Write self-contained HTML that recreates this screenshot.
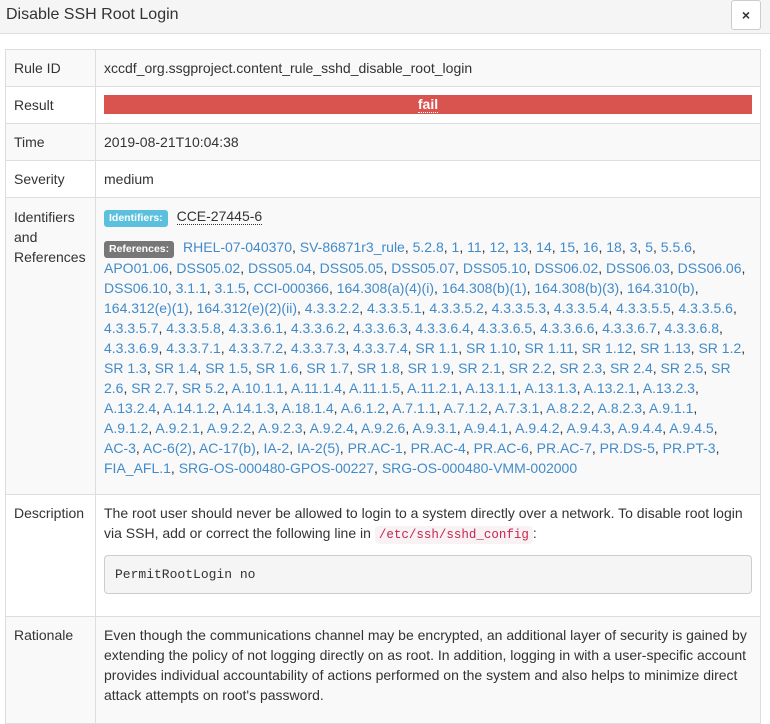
<!DOCTYPE html>
<html><head><meta charset="utf-8"><style>
body{margin:0;width:770px;height:724px;overflow:hidden;background:#fff;font-family:"Liberation Sans",sans-serif;font-size:14px;color:#333;line-height:20px}
.hdr{position:absolute;left:0;top:0;width:770px;height:33px;background:#f5f5f5;border-bottom:1px solid #ddd}
.hdr h4{margin:0;position:absolute;left:6px;top:5px;font-size:16px;font-weight:normal;line-height:20px}
.close{position:absolute;left:731px;top:0;width:28px;height:28px;border:1px solid #ccc;border-radius:3px;background:#fff;text-align:center;line-height:28px;font-size:14px;font-weight:bold}
table{position:absolute;left:5px;top:49px;width:756px;border-collapse:collapse}
td{border:1px solid #ddd;padding:8px;vertical-align:top}
td.l{width:73px}
tr.s td{background:#f9f9f9}
.fail{background:#d9534f;color:#fff;text-align:center;font-weight:bold;height:19px;line-height:19px}
.fail span{border-bottom:1px dotted #fff}
.lab{display:inline-block;font-size:10.5px;font-weight:bold;color:#fff;padding:0 5px;border-radius:3px;line-height:17px;margin-right:5px}
a{color:#428bca;text-decoration:none}
.refs div{white-space:nowrap}
code{font-family:"Liberation Mono",monospace;font-size:12.5px;color:#c7254e;background:#f9f2f4;padding:2px 4px;border-radius:4px}
pre{font-family:"Liberation Mono",monospace;font-size:13px;background:#f5f5f5;border:1px solid #ccc;border-radius:4px;padding:9px 10px;margin:10px 0 10px;line-height:19px}
p{margin:0}
</style></head><body>
<div class="hdr"><h4>Disable SSH Root Login</h4><div class="close">×</div></div>
<table>
<tr class="s"><td class="l">Rule ID</td><td>xccdf_org.ssgproject.content_rule_sshd_disable_root_login</td></tr>
<tr><td class="l">Result</td><td><div class="fail"><span>fail</span></div></td></tr>
<tr class="s"><td class="l">Time</td><td>2019-08-21T10:04:38</td></tr>
<tr><td class="l">Severity</td><td>medium</td></tr>
<tr class="s"><td class="l" style="padding-top:9px">Identifiers and References</td><td style="padding-bottom:16px">
<div style="margin-top:0px"><span class="lab" style="background:#5bc0de">Identifiers:</span> <span style="border-bottom:1px dotted #333">CCE-27445-6</span></div>
<div class="refs" style="margin-top:10px">
<div><span class="lab" style="background:#777">References:</span> <a>RHEL-07-040370</a>, <a>SV-86871r3_rule</a>, <a>5.2.8</a>, <a>1</a>, <a>11</a>, <a>12</a>, <a>13</a>, <a>14</a>, <a>15</a>, <a>16</a>, <a>18</a>, <a>3</a>, <a>5</a>, <a>5.5.6</a>,</div>
<div><a>APO01.06</a>, <a>DSS05.02</a>, <a>DSS05.04</a>, <a>DSS05.05</a>, <a>DSS05.07</a>, <a>DSS05.10</a>, <a>DSS06.02</a>, <a>DSS06.03</a>, <a>DSS06.06</a>,</div>
<div><a>DSS06.10</a>, <a>3.1.1</a>, <a>3.1.5</a>, <a>CCI-000366</a>, <a>164.308(a)(4)(i)</a>, <a>164.308(b)(1)</a>, <a>164.308(b)(3)</a>, <a>164.310(b)</a>,</div>
<div><a>164.312(e)(1)</a>, <a>164.312(e)(2)(ii)</a>, <a>4.3.3.2.2</a>, <a>4.3.3.5.1</a>, <a>4.3.3.5.2</a>, <a>4.3.3.5.3</a>, <a>4.3.3.5.4</a>, <a>4.3.3.5.5</a>, <a>4.3.3.5.6</a>,</div>
<div><a>4.3.3.5.7</a>, <a>4.3.3.5.8</a>, <a>4.3.3.6.1</a>, <a>4.3.3.6.2</a>, <a>4.3.3.6.3</a>, <a>4.3.3.6.4</a>, <a>4.3.3.6.5</a>, <a>4.3.3.6.6</a>, <a>4.3.3.6.7</a>, <a>4.3.3.6.8</a>,</div>
<div><a>4.3.3.6.9</a>, <a>4.3.3.7.1</a>, <a>4.3.3.7.2</a>, <a>4.3.3.7.3</a>, <a>4.3.3.7.4</a>, <a>SR 1.1</a>, <a>SR 1.10</a>, <a>SR 1.11</a>, <a>SR 1.12</a>, <a>SR 1.13</a>, <a>SR 1.2</a>,</div>
<div><a>SR 1.3</a>, <a>SR 1.4</a>, <a>SR 1.5</a>, <a>SR 1.6</a>, <a>SR 1.7</a>, <a>SR 1.8</a>, <a>SR 1.9</a>, <a>SR 2.1</a>, <a>SR 2.2</a>, <a>SR 2.3</a>, <a>SR 2.4</a>, <a>SR 2.5</a>, <a>SR</a></div>
<div><a>2.6</a>, <a>SR 2.7</a>, <a>SR 5.2</a>, <a>A.10.1.1</a>, <a>A.11.1.4</a>, <a>A.11.1.5</a>, <a>A.11.2.1</a>, <a>A.13.1.1</a>, <a>A.13.1.3</a>, <a>A.13.2.1</a>, <a>A.13.2.3</a>,</div>
<div><a>A.13.2.4</a>, <a>A.14.1.2</a>, <a>A.14.1.3</a>, <a>A.18.1.4</a>, <a>A.6.1.2</a>, <a>A.7.1.1</a>, <a>A.7.1.2</a>, <a>A.7.3.1</a>, <a>A.8.2.2</a>, <a>A.8.2.3</a>, <a>A.9.1.1</a>,</div>
<div><a>A.9.1.2</a>, <a>A.9.2.1</a>, <a>A.9.2.2</a>, <a>A.9.2.3</a>, <a>A.9.2.4</a>, <a>A.9.2.6</a>, <a>A.9.3.1</a>, <a>A.9.4.1</a>, <a>A.9.4.2</a>, <a>A.9.4.3</a>, <a>A.9.4.4</a>, <a>A.9.4.5</a>,</div>
<div><a>AC-3</a>, <a>AC-6(2)</a>, <a>AC-17(b)</a>, <a>IA-2</a>, <a>IA-2(5)</a>, <a>PR.AC-1</a>, <a>PR.AC-4</a>, <a>PR.AC-6</a>, <a>PR.AC-7</a>, <a>PR.DS-5</a>, <a>PR.PT-3</a>,</div>
<div><a>FIA_AFL.1</a>, <a>SRG-OS-000480-GPOS-00227</a>, <a>SRG-OS-000480-VMM-002000</a></div>
</div></td></tr>
<tr><td class="l">Description</td><td style="padding-bottom:12px"><p>The root user should never be allowed to login to a system directly over a network. To disable root login via SSH, add or correct the following line in <code>/etc/ssh/sshd_config</code>:</p><pre>PermitRootLogin no</pre></td></tr>
<tr class="s"><td class="l">Rationale</td><td style="padding-bottom:18px">Even though the communications channel may be encrypted, an additional layer of security is gained by extending the policy of not logging directly on as root. In addition, logging in with a user-specific account provides individual accountability of actions performed on the system and also helps to minimize direct attack attempts on root's password.</td></tr>
</table>
</body></html>
